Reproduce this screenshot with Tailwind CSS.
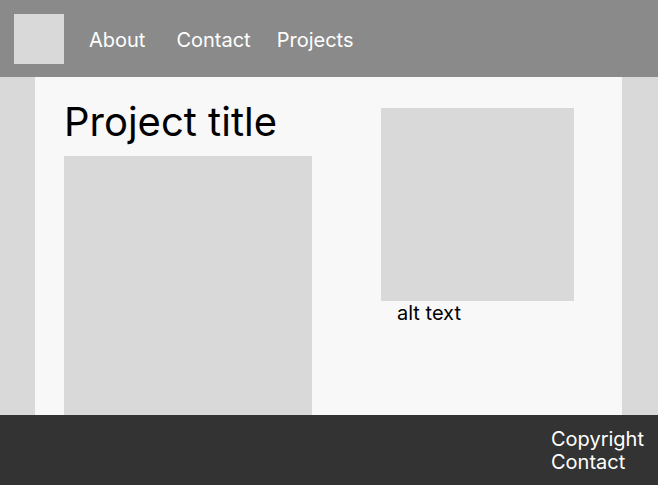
<!DOCTYPE html>
<html lang="en">
<head>
<meta charset="utf-8">
<meta name="viewport" content="width=device-width, initial-scale=1">
<title>Project title</title>
<script src="https://cdn.jsdelivr.net/npm/@tailwindcss/browser@4"></script>
</head>
<body class="flex min-h-screen flex-col bg-[#d9d9d9] font-['Inter',sans-serif] text-xl leading-6 text-black">
  <header class="flex items-center bg-[#8a8a8a] px-3.5 pt-3.5 pb-[13px] text-white">
    <a href="#" aria-label="Home" class="size-[50px] bg-[#d9d9d9]"></a>
    <nav class="ml-[25px] flex pt-0.5">
      <a href="#" class="mr-[31px]">About</a>
      <a href="#" class="mr-[26px]">Contact</a>
      <a href="#">Projects</a>
    </nav>
  </header>
  <main class="mr-9 ml-[35px] flex grow justify-between bg-[#f8f8f8] pr-12 pl-[29px]">
    <section class="flex w-[248px] flex-col pt-[21px]">
      <h1 class="text-[40px] leading-12">Project title</h1>
      <div class="mt-2.5 grow bg-[#d9d9d9]"></div>
    </section>
    <figure class="w-[193px] pt-[31px]">
      <div class="aspect-square bg-[#d9d9d9]"></div>
      <figcaption class="pl-4">alt text</figcaption>
    </figure>
  </main>
  <footer class="flex justify-end bg-[#333333] px-3.5 pt-[13px] pb-[11px] text-white">
    <div class="flex flex-col leading-[23px]">
      <span>Copyright</span>
      <a href="#">Contact</a>
    </div>
  </footer>
</body>
</html>
